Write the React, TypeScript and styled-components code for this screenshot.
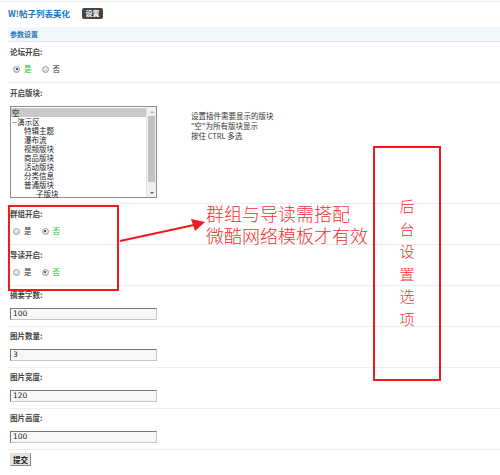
import React from 'react'
import styled, { createGlobalStyle } from 'styled-components'

const GlobalStyle = createGlobalStyle`
  html, body {
    margin: 0;
    padding: 0;
    background: #fff;
  }
  body {
    font-family: "Noto Sans CJK SC", "DejaVu Sans", sans-serif;
    font-size: 7.5px;
    color: #333;
  }
`

const Page = styled.div`
  position: relative;
  width: 500px;
  height: 475px;
  overflow: hidden;
`

const TopBar = styled.div`
  margin-top: 1px;
  border-top: 1px solid #e8eff6;
  height: 26px;
  box-sizing: border-box;
  padding: 5px 0 0 8px;
  display: flex;
  align-items: flex-start;
`

const Title = styled.div`
  font-size: 8.5px;
  line-height: 12px;
  font-weight: bold;
  color: #1f74b8;
`

const Badge = styled.span`
  margin: 1px 0 0 12px;
  width: 21px;
  height: 11px;
  border-radius: 2px;
  background: #454545;
  color: #fff;
  font-size: 7px;
  font-weight: bold;
  line-height: 11px;
  text-align: center;
`

const Form = styled.div`
  margin-left: 8px;
`

const SectionHead = styled.div`
  height: 15px;
  box-sizing: border-box;
  padding-left: 2px;
  background: #f1f6fb;
  border-bottom: 1px solid #e1eaf3;
  color: #2878bd;
  font-size: 7px;
  font-weight: bold;
  line-height: 14px;
`

const Row = styled.div<{ $top?: number; $bottom?: number; $last?: boolean }>`
  padding: ${(p) => p.$top ?? 5}px 0 ${(p) => p.$bottom ?? 8}px 2px;
  border-bottom: ${(p) => (p.$last ? 'none' : '1px solid #e8f0f6')};
`

const Label = styled.div<{ $gap?: number }>`
  height: 10px;
  line-height: 10px;
  margin-bottom: ${(p) => p.$gap ?? 7}px;
  font-weight: bold;
  color: #444;
`

const Options = styled.div`
  display: flex;
  align-items: center;
  gap: 10px;
  height: 10px;
  padding-left: 3px;
`

const Option = styled.label<{ $on?: boolean }>`
  display: flex;
  align-items: center;
  gap: 4px;
  line-height: 10px;
  color: ${(p) => (p.$on ? '#19c919' : '#333')};
`

const Dot = styled.span<{ $on?: boolean }>`
  position: relative;
  width: 7px;
  height: 7px;
  box-sizing: border-box;
  border-radius: 50%;
  border: 1px solid #9a9a9a;
  background: linear-gradient(#f4f4f4, #d8d8d8);

  &::after {
    content: '';
    display: ${(p) => (p.$on ? 'block' : 'none')};
    position: absolute;
    left: 1.5px;
    top: 1.5px;
    width: 2px;
    height: 2px;
    border-radius: 50%;
    background: #222;
  }
`

const Pick = styled.div`
  display: flex;
  align-items: flex-start;
`

const ListBox = styled.div`
  width: 147px;
  height: 92px;
  box-sizing: border-box;
  border: 1px solid #8c8c8c;
  display: flex;
  background: #fff;
`

const Items = styled.div`
  flex: 1;
  padding-top: 1px;
`

const Item = styled.div<{ $level: number; $selected?: boolean }>`
  height: 9px;
  line-height: 9px;
  padding-left: ${(p) => 1 + p.$level * 12}px;
  background: ${(p) => (p.$selected ? '#c9c9c9' : 'transparent')};
  color: #222;
  white-space: nowrap;
`

const Scroll = styled.div`
  width: 9px;
  display: flex;
  flex-direction: column;
  align-items: center;
  background: #f0f0f0;
  border-left: 1px solid #e4e4e4;
`

const Arrow = styled.div<{ $down?: boolean }>`
  height: 9px;
  display: flex;
  align-items: center;
  justify-content: center;

  &::before {
    content: '';
    border-left: 2px solid transparent;
    border-right: 2px solid transparent;
    ${(p) => (p.$down ? 'border-top: 2px solid #555;' : 'border-bottom: 2px solid #aaa;')}
  }
`

const Thumb = styled.div`
  width: 7px;
  height: 66px;
  background: #c2c2c2;
`

const Spacer = styled.div`
  flex: 1;
`

const Hint = styled.div`
  margin: 5px 0 0 34px;
  line-height: 10px;
  color: #333;
`

const Field = styled.div`
  width: 147px;
  height: 12px;
  box-sizing: border-box;
  border: 1px solid #c6c6c6;
  border-top-color: #777;
  border-left-color: #777;
  background: #f7f7f7;
  padding-left: 2px;
  font-family: "DejaVu Sans", sans-serif;
  font-size: 7.5px;
  line-height: 10px;
  color: #222;
`

const Submit = styled.button`
  margin: 0;
  width: 21px;
  height: 13px;
  padding: 0;
  box-sizing: border-box;
  border: 1px solid #888;
  border-top-color: #ddd;
  border-left-color: #ddd;
  background: #e4e4e4;
  font-family: inherit;
  font-size: 7.5px;
  font-weight: bold;
  line-height: 11px;
  color: #222;
`

/* red notes drawn over the form */
const Frame = styled.div<{ $l: number; $t: number; $w: number; $h: number }>`
  position: absolute;
  left: ${(p) => p.$l}px;
  top: ${(p) => p.$t}px;
  width: ${(p) => p.$w}px;
  height: ${(p) => p.$h}px;
  box-sizing: border-box;
  border: 2px solid #f21b1b;
`

const SideFrame = styled(Frame)`
  display: flex;
  align-items: center;
  justify-content: center;
`

const Vertical = styled.div`
  display: flex;
  flex-direction: column;
  align-items: center;
  margin-top: -2px;
  font-size: 15px;
  font-weight: 300;
  line-height: 22.5px;
  color: #f43030;
`

const Note = styled.div`
  position: absolute;
  left: 206px;
  top: 202px;
  font-size: 18px;
  font-weight: 300;
  line-height: 22px;
  color: #f43030;
  white-space: nowrap;
`

const Pointer = styled.svg`
  position: absolute;
  left: 116px;
  top: 214px;
`

type Choice = { name: string; value: 'yes' | 'no' }

const choices: Choice[] = [
  { name: '论坛开启:', value: 'yes' },
  { name: '群组开启:', value: 'no' },
  { name: '导读开启:', value: 'no' },
]

const forums: [string, number][] = [
  ['空', 0],
  ['--演示区', 0],
  ['特辑主题', 1],
  ['瀑布流', 1],
  ['视频版块', 1],
  ['商品版块', 1],
  ['活动版块', 1],
  ['分类信息', 1],
  ['普通版块', 1],
  ['子版块', 2],
]

const fields = [
  { name: '摘要字数:', value: '100' },
  { name: '图片数量:', value: '3' },
  { name: '图片宽度:', value: '120' },
  { name: '图片高度:', value: '100' },
]

const YesNo = ({ value }: { value: 'yes' | 'no' }) => (
  <Options>
    <Option $on={value === 'yes'}>
      <Dot $on={value === 'yes'} />是
    </Option>
    <Option $on={value === 'no'}>
      <Dot $on={value === 'no'} />否
    </Option>
  </Options>
)

export default function App() {
  return (
    <Page>
      <GlobalStyle />
      <TopBar>
        <Title>W!帖子列表美化</Title>
        <Badge>设置</Badge>
      </TopBar>

      <Form>
        <SectionHead>参数设置</SectionHead>

        <Row>
          <Label>{choices[0].name}</Label>
          <YesNo value={choices[0].value} />
        </Row>

        <Row $bottom={5}>
          <Label $gap={8}>开启版块:</Label>
          <Pick>
            <ListBox>
              <Items>
                {forums.map(([name, level], i) => (
                  <Item key={name} $level={level} $selected={i === 0}>
                    {name}
                  </Item>
                ))}
              </Items>
              <Scroll>
                <Arrow />
                <Thumb />
                <Spacer />
                <Arrow $down />
              </Scroll>
            </ListBox>
            <Hint>
              设置插件需要显示的版块
              <br />
              "空"为所有版块显示
              <br />
              按住 CTRL 多选
            </Hint>
          </Pick>
        </Row>

        {choices.slice(1).map((c) => (
          <Row key={c.name}>
            <Label>{c.name}</Label>
            <YesNo value={c.value} />
          </Row>
        ))}

        {fields.map((f) => (
          <Row key={f.name} $top={4} $bottom={6}>
            <Label $gap={8}>{f.name}</Label>
            <Field>{f.value}</Field>
          </Row>
        ))}

        <Row $last $top={3}>
          <Submit>提交</Submit>
        </Row>
      </Form>

      <Frame $l={8} $t={205} $w={111} $h={86} />
      <Pointer width="92" height="32" viewBox="0 0 92 32">
        <path d="M4 27 L78 11" stroke="#f21b1b" strokeWidth="2.2" fill="none" />
        <path d="M89 8 L75 5 L79 17 Z" fill="#f21b1b" />
      </Pointer>
      <Note>
        群组与导读需搭配
        <br />
        微酷网络模板才有效
      </Note>

      <SideFrame $l={373} $t={146} $w={68} $h={235}>
        <Vertical>
          {'后台设置选项'.split('').map((ch) => (
            <span key={ch}>{ch}</span>
          ))}
        </Vertical>
      </SideFrame>
    </Page>
  )
}
